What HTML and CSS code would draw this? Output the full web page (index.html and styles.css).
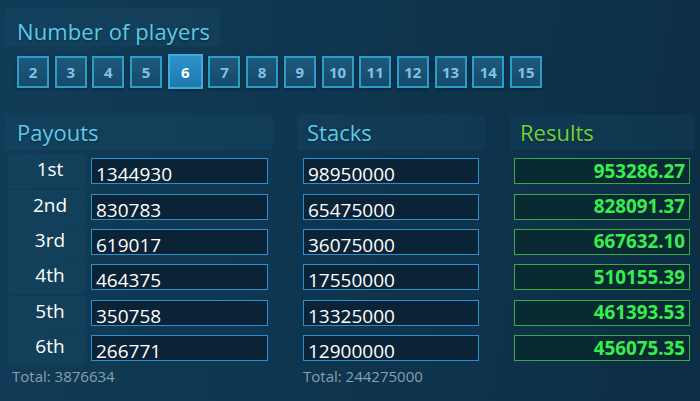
FILE: index.html
```html
<!DOCTYPE html>
<html>
<head>
<meta charset="utf-8">
<link rel="stylesheet" href="styles.css">
</head>
<body>
<div class="page">
  <div class="top">
    <div class="title-panel"><span class="title">Number of players</span></div>
    <div class="buttons">
      <div class="btn">2</div>
      <div class="btn">3</div>
      <div class="btn">4</div>
      <div class="btn">5</div>
      <div class="btn sel">6</div>
      <div class="btn">7</div>
      <div class="btn">8</div>
      <div class="btn">9</div>
      <div class="btn">10</div>
      <div class="btn">11</div>
      <div class="btn">12</div>
      <div class="btn">13</div>
      <div class="btn">14</div>
      <div class="btn">15</div>
    </div>
  </div>
  <div class="columns">
    <div class="col payouts">
      <div class="head"><span class="head-text">Payouts</span></div>
      <div class="rows">
        <div class="row"><div class="label">1st</div><div class="field">1344930</div></div>
        <div class="row"><div class="label">2nd</div><div class="field">830783</div></div>
        <div class="row"><div class="label">3rd</div><div class="field">619017</div></div>
        <div class="row"><div class="label">4th</div><div class="field">464375</div></div>
        <div class="row"><div class="label">5th</div><div class="field">350758</div></div>
        <div class="row"><div class="label">6th</div><div class="field">266771</div></div>
      </div>
      <div class="total total-pay">Total: 3876634</div>
    </div>
    <div class="col stacks">
      <div class="head"><span class="head-text">Stacks</span></div>
      <div class="rows">
        <div class="row"><div class="field">98950000</div></div>
        <div class="row"><div class="field">65475000</div></div>
        <div class="row"><div class="field">36075000</div></div>
        <div class="row"><div class="field">17550000</div></div>
        <div class="row"><div class="field">13325000</div></div>
        <div class="row"><div class="field">12900000</div></div>
      </div>
      <div class="total total-stack">Total: 244275000</div>
    </div>
    <div class="col results">
      <div class="head"><span class="head-text green">Results</span></div>
      <div class="rows">
        <div class="row"><div class="result">953286.27</div></div>
        <div class="row"><div class="result">828091.37</div></div>
        <div class="row"><div class="result">667632.10</div></div>
        <div class="row"><div class="result">510155.39</div></div>
        <div class="row"><div class="result">461393.53</div></div>
        <div class="row"><div class="result">456075.35</div></div>
      </div>
    </div>
  </div>
</div>
</body>
</html>
```
FILE: styles.css
```css
html, body {
  margin: 0;
  padding: 0;
}
body {
  width: 700px;
  height: 401px;
  overflow: hidden;
  font-family: "Open Sans", "Noto Sans", sans-serif;
  background: linear-gradient(100deg, #113c57 0%, #0f3650 45%, #0c2e45 100%);
}
.page {
  width: 700px;
  height: 401px;
}
.top {
  padding: 8px 0 0 5px;
}
.title-panel {
  width: 215px;
  height: 38px;
  background: rgba(40, 110, 140, 0.12);
  border-radius: 3px;
  box-sizing: border-box;
  padding: 8px 0 0 12px;
}
.title {
  font-size: 22px;
  line-height: 30px;
  color: #5ccbe9;
  display: block;
  letter-spacing: 0.1px;
  text-shadow: 0 1px 2px rgba(0, 0, 0, 0.4);
}
.buttons {
  display: flex;
  align-items: center;
  gap: 5.7px;
  margin: 8px 0 0 12px;
  height: 35px;
}
.btn {
  width: 32px;
  height: 32px;
  box-sizing: border-box;
  border: 2px solid #2b9dc8;
  background: linear-gradient(#1d5a7c, #15496a);
  color: #7fc2e3;
  font-weight: 700;
  font-size: 15px;
  display: flex;
  align-items: center;
  justify-content: center;
  box-shadow: 0 1px 3px rgba(0, 0, 0, 0.35);
}
.btn.sel {
  width: 35px;
  height: 35px;
  border-color: #3caede;
  background: linear-gradient(#2e93ca, #1f78ae);
  color: #ffffff;
}
.columns {
  display: flex;
  margin-top: 26px;
  padding-left: 5px;
}
.col {
  display: flex;
  flex-direction: column;
}
.payouts {
  width: 268px;
}
.stacks {
  width: 188px;
  margin-left: 24px;
}
.results {
  width: 185px;
  margin-left: 25px;
}
.head {
  height: 35px;
  background: rgba(40, 110, 140, 0.12);
  border-radius: 3px;
  box-sizing: border-box;
  padding: 2px 0 0 10px;
}
.payouts .head {
  padding-left: 12px;
}
.head-text {
  display: block;
  font-size: 22px;
  line-height: 30px;
  color: #5ccbe9;
  text-shadow: 0 1px 2px rgba(0, 0, 0, 0.4);
}
.head-text.green {
  color: #70d232;
}
.rows {
  margin-top: 3.5px;
  display: flex;
  flex-direction: column;
}
.row {
  height: 35.4px;
  display: flex;
  align-items: center;
}
.label {
  width: 77px;
  height: 34px;
  margin-left: 3px;
  margin-right: 6px;
  background: rgba(40, 110, 140, 0.1);
  color: #ffffff;
  font-size: 19px;
  display: flex;
  align-items: center;
  justify-content: center;
  padding: 0 0 4px 7px;
  box-sizing: border-box;
}
.field {
  width: 177px;
  height: 26px;
  box-sizing: border-box;
  border: 1.5px solid #2c8fcc;
  background: #0a2337;
  color: #ffffff;
  font-size: 19px;
  line-height: 16px;
  padding: 7px 0 0 4px;
  white-space: nowrap;
}
.stacks .field {
  width: 176px;
  margin-left: 6px;
}
.result {
  width: 176px;
  height: 26px;
  margin-left: 4px;
  box-sizing: border-box;
  border: 1.5px solid #3aa845;
  background: #0a2a33;
  color: #36ef4d;
  font-weight: 700;
  font-size: 18.8px;
  line-height: 20px;
  text-align: right;
  padding: 1.5px 4px 0 0;
}
.total {
  font-size: 15px;
  line-height: 20px;
  color: #889fb0;
}
.total-pay {
  padding-left: 7px;
}
.total-stack {
  padding-left: 6px;
}
```
